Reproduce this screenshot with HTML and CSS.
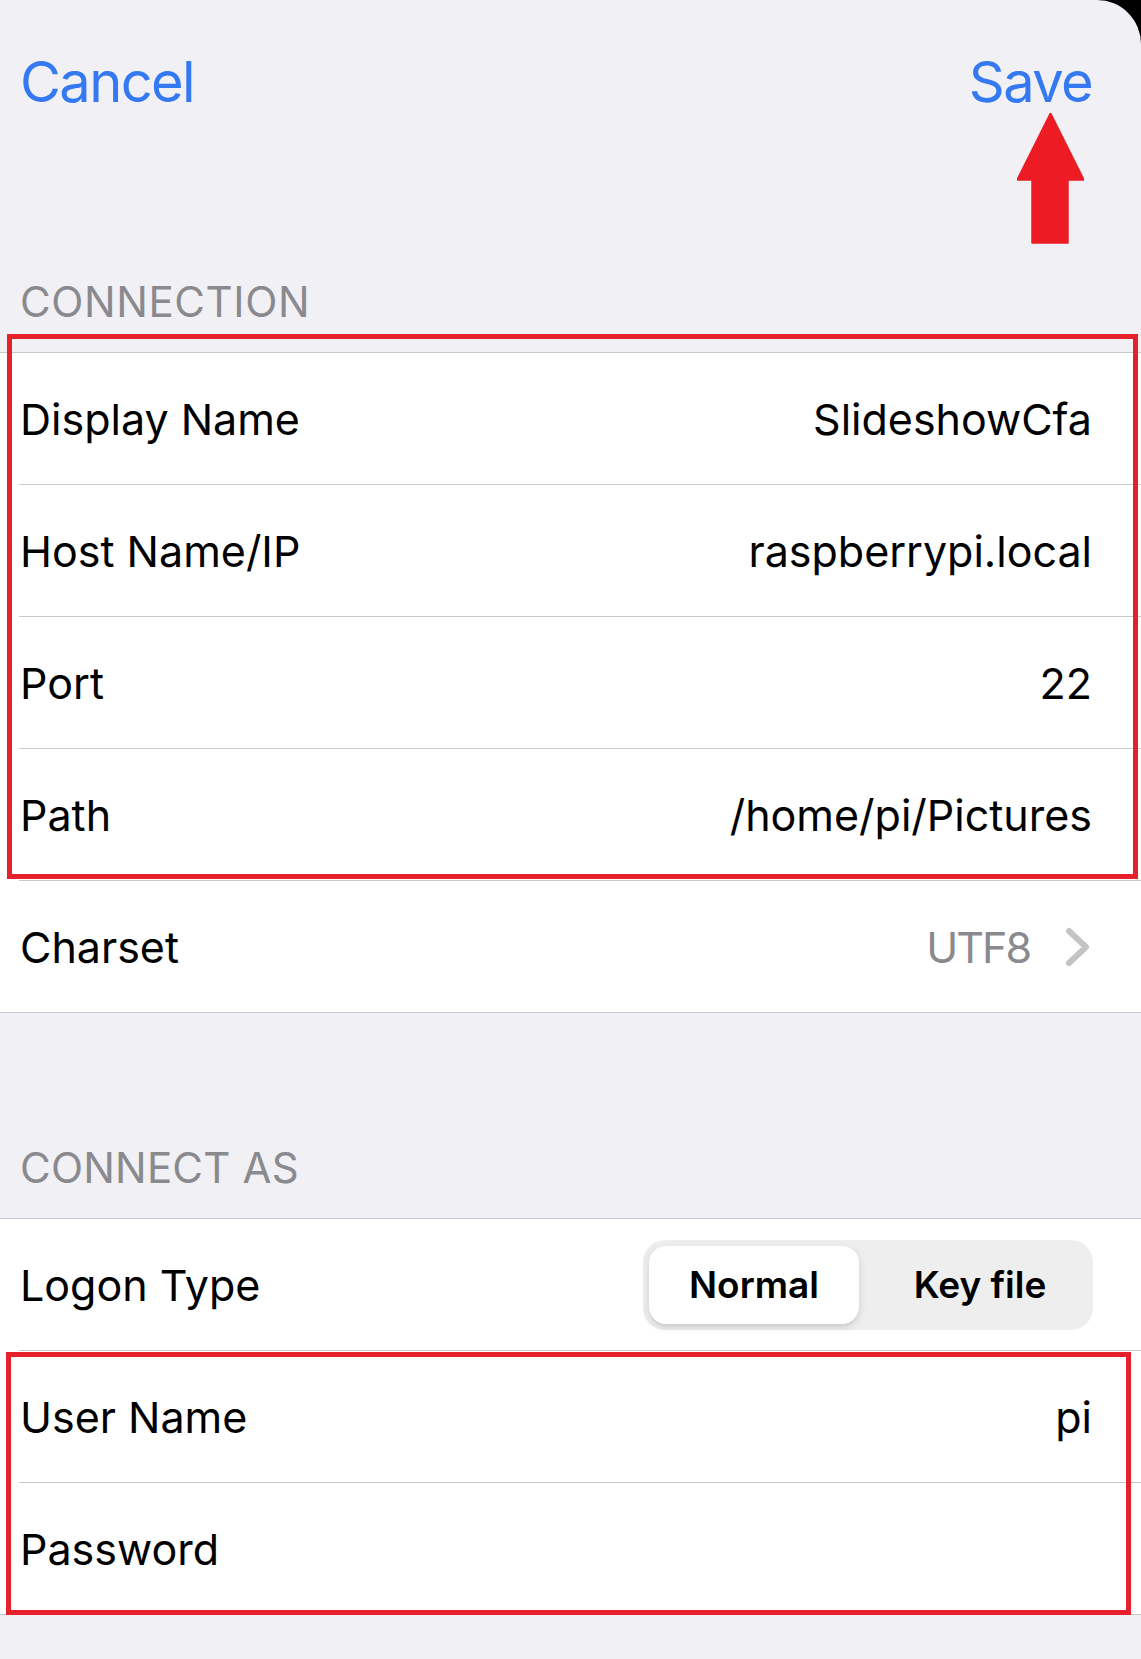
FILE: index.html
```html
<!DOCTYPE html>
<html lang="en">
<head>
<meta charset="utf-8">
<title>Edit Connection</title>
<link rel="stylesheet" href="styles.css">
</head>
<body>
<div class="sheet">
  <header class="navbar">
    <span class="nav-btn">Cancel</span>
    <span class="nav-btn">Save</span>
    <svg class="arrow" width="67" height="131" viewBox="0 0 67 131" aria-hidden="true">
      <polygon points="33.5,0 0,67 15,67 15,130 51,130 51,67 67,67" fill="#ed1c24" stroke="#ed1c24" stroke-width="1.5" stroke-linejoin="round"/>
    </svg>
  </header>

  <div class="section-header">CONNECTION</div>
  <div class="group">
    <div class="highlight hl-top">
      <div class="row"><span class="label">Display Name</span><span class="value">SlideshowCfa</span></div>
      <div class="row"><span class="label">Host Name/IP</span><span class="value">raspberrypi.local</span></div>
      <div class="row"><span class="label">Port</span><span class="value">22</span></div>
      <div class="row"><span class="label">Path</span><span class="value">/home/pi/Pictures</span></div>
    </div>
    <div class="row last chevron-row">
      <span class="label">Charset</span>
      <span class="value muted">UTF8</span>
      <svg class="chevron" width="26" height="40" viewBox="0 0 26 40" aria-hidden="true">
        <polyline points="4,4 21,20 4,36" fill="none" stroke="#c4c4c7" stroke-width="6" stroke-linecap="round" stroke-linejoin="round"/>
      </svg>
    </div>
  </div>

  <div class="section-header second">CONNECT AS</div>
  <div class="group">
    <div class="row">
      <span class="label">Logon Type</span>
      <div class="segmented">
        <span class="seg active">Normal</span>
        <span class="seg other">Key file</span>
      </div>
    </div>
    <div class="highlight hl-bottom">
      <div class="row"><span class="label">User Name</span><span class="value">pi</span></div>
      <div class="row last"><span class="label">Password</span><span class="value"></span></div>
    </div>
  </div>
  <div class="bottom-space"></div>
</div>
</body>
</html>
```

FILE: styles.css
```css
html, body {
  margin: 0;
  padding: 0;
  background: #000;
}

body {
  font-family: Inter, "Liberation Sans", Arial, sans-serif;
  color: #000;
}

.sheet {
  width: 1141px;
  min-height: 1659px;
  background: #f0f0f5;
  border-top-right-radius: 44px;
  overflow: hidden;
}

.navbar {
  position: relative;
  display: flex;
  justify-content: space-between;
  padding: 50px 49px 0 20px;
  height: 64px;
}

.nav-btn {
  font-size: 56px;
  line-height: 64px;
  color: #3479f2;
  letter-spacing: -1.6px;
}

.arrow {
  position: absolute;
  top: 113px;
  right: 57px;
}

.section-header {
  padding: 163px 20px 25px;
  font-size: 42px;
  line-height: 50px;
  color: #8a8a8e;
  letter-spacing: 0.6px;
}

.section-header.second {
  padding-top: 130px;
  letter-spacing: 0.2px;
}

.group {
  background: #fff;
  border-top: 1px solid #c8c7cc;
  border-bottom: 1px solid #c8c7cc;
}

.row {
  display: flex;
  align-items: center;
  justify-content: space-between;
  height: 132px;
  box-sizing: border-box;
  margin-left: 19px;
  padding: 0 49px 0 1px;
  border-bottom: 1px solid #c8c7cc;
  font-size: 43px;
  letter-spacing: 0;
}

.row.last {
  height: 131px;
  border-bottom: none;
}

.label {
  white-space: nowrap;
}

.value {
  white-space: nowrap;
}

.muted {
  color: #8a8a8e;
  letter-spacing: -2px;
}

.chevron-row {
  padding-right: 50px;
}

.chevron-row .value {
  margin-left: auto;
  margin-right: 35px;
}

.chevron {
  display: block;
}

.highlight {
  position: relative;
}

.highlight::after {
  content: "";
  position: absolute;
  border: 5px solid #e6212c;
  pointer-events: none;
}

.hl-top::after {
  top: -19px;
  left: 7px;
  right: 3px;
  bottom: 2px;
}

.hl-bottom::after {
  top: 1px;
  left: 6px;
  right: 10px;
  bottom: -1px;
}

.segmented {
  display: flex;
  width: 450px;
  height: 90px;
  box-sizing: border-box;
  padding: 6px;
  margin-right: -1px;
  background: #eeeeef;
  border-radius: 22px;
}

.seg {
  display: flex;
  align-items: center;
  justify-content: center;
  font-size: 37px;
  font-weight: 600;
  letter-spacing: 0;
}

.seg.active {
  flex: 0 0 210px;
  background: #fff;
  border-radius: 17px;
  box-shadow: 0 3px 8px rgba(0, 0, 0, 0.12), 0 3px 1px rgba(0, 0, 0, 0.04);
}

.seg.other {
  flex: 1;
  padding-left: 14px;
}

.bottom-space {
  height: 44px;
}
```
